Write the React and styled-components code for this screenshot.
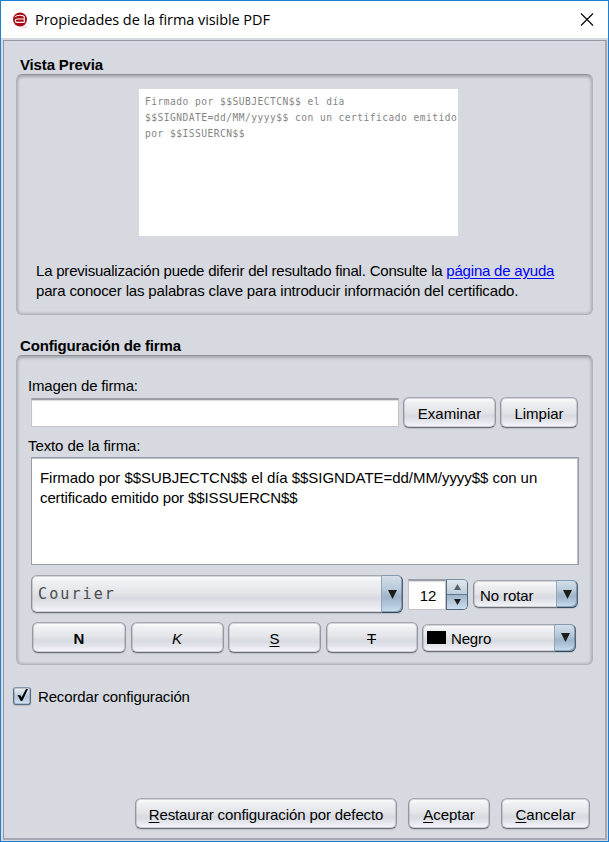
import React from "react";
import styled, { createGlobalStyle } from "styled-components";

const GlobalStyle = createGlobalStyle`
  * { box-sizing: border-box; }
  html, body { margin: 0; padding: 0; overflow: hidden; }
  body { font-family: "Liberation Sans", Arial, sans-serif; font-size: 15px; color: #000; }
`;

const Window = styled.div`
  width: 609px;
  height: 842px;
  border: 1px solid #1b80d3;
  background: #d6d9df;
  display: flex;
  flex-direction: column;
`;

const TitleBar = styled.header`
  height: 37px;
  flex: none;
  background: #fff;
  display: flex;
  align-items: center;
  padding: 0 14px 0 11px;
  svg { flex: none; display: block; }
`;

const Title = styled.h1`
  margin: 0 auto 0 7px;
  font: 400 14.5px/20px "Open Sans", "Noto Sans", sans-serif;
  letter-spacing: -0.07px;
  white-space: nowrap;
`;

const Content = styled.main`
  flex: 1;
  margin: 2px 1px 1px 2px;
  border: 1px solid #9297a1;
  border-right: 2px solid #a5a9b3;
  border-bottom: 2px solid #a5a9b3;
  display: flex;
  flex-direction: column;
  padding: 14px 12px 9px;
`;

const Heading = styled.h2`
  margin: 0 0 0 4px;
  height: 19px;
  font-size: 15px;
  line-height: 19px;
  font-weight: 700;
  letter-spacing: ${(p) => p.$ls || 0}px;
`;

const Panel = styled.section`
  width: 577px;
  height: ${(p) => p.$h}px;
  border: 1px solid #b1b3b8;
  border-top-color: #8f9299;
  border-radius: 6px;
  box-shadow: inset 0 2px 3px #a9acb2, inset 1px 0 3px #bbbdc2, inset -1px 0 3px #bbbdc2, inset 0 -1px 2px #c9cbd0;
  display: flex;
  flex-direction: column;
  padding: ${(p) => p.$pad};
`;

const Preview = styled.div`
  width: 319px;
  height: 147px;
  background: #fff;
  align-self: center;
  margin-right: 12px;
  padding: 5px 0 0 6px;
  overflow: hidden;
  font: 9.6px/16px "DejaVu Sans Mono", monospace;
  letter-spacing: 0.47px;
  color: #858585;
  white-space: pre;
`;

const Line = styled.div`
  height: ${(p) => p.$h || 20}px;
  line-height: ${(p) => p.$h || 20}px;
  margin: ${(p) => p.$m || 0};
  letter-spacing: ${(p) => p.$ls || 0}px;
  white-space: nowrap;
`;

const Help = styled.div`
  margin: 25px 0 0 19px;
`;

const Link = styled.a`
  color: #0000ff;
  text-decoration: underline;
  text-underline-offset: 2px;
`;

const Row = styled.div`
  display: flex;
  align-items: ${(p) => p.$align || "flex-start"};
  gap: ${(p) => (p.$gap === undefined ? 4 : p.$gap)}px;
  margin: ${(p) => p.$m || 0};
`;

const face = `linear-gradient(#fdfdfe 0%, #eeeff2 18%, #e3e5e9 45%, #d7dae0 62%, #e4e6ec 80%, #f5f7fc 100%)`;

const Button = styled.button`
  width: ${(p) => p.$w}px;
  height: 31px;
  flex: none;
  border: 1px solid;
  border-color: #a5a8ae #94979e #6c6f76;
  border-radius: 6px;
  background: ${face} padding-box;
  box-shadow: inset 0 0 0 1px rgba(150, 153, 160, 0.4), 0 1px 1px #bcbfc6;
  padding: 2px 0 0;
  font: 15px/18px "Liberation Sans", Arial, sans-serif;
  font-weight: ${(p) => (p.$bold ? 700 : 400)};
  font-style: ${(p) => (p.$italic ? "italic" : "normal")};
  letter-spacing: ${(p) => p.$ls || 0}px;
  color: #000;
  white-space: nowrap;
  u { text-underline-offset: 2px; text-decoration-thickness: 1px; }
`;

const Field = styled.div`
  width: ${(p) => p.$w}px;
  height: ${(p) => p.$h}px;
  flex: none;
  background: #fff;
  border: 1px solid #c3c5ca;
  border-top: 2px solid #9b9ea4;
  box-shadow: inset 0 1px 1px #dcdcdc;
  padding-left: 2px;
  text-align: center;
  line-height: 29px;
`;

const TextBox = styled.div`
  width: 548px;
  height: 108px;
  background: #fff;
  border: 1px solid #9aa0ab;
  box-shadow: inset 0 1px 0 #b9bec7, inset -1px 0 0 #b9bec7;
  padding: 10px 8px;
  margin: 0 0 10px 2px;
`;

const blue = `linear-gradient(#d3dfe9 0%, #b5c7d7 40%, #9eb4c8 58%, #b3c7da 80%, #cbdff2 100%)`;

const Combo = styled.div`
  width: ${(p) => p.$w}px;
  height: ${(p) => p.$h}px;
  flex: none;
  display: flex;
  border: 1px solid;
  border-color: #a3a7ae #8d9199 #6a6e76;
  border-radius: 6px;
  background: ${face};
  box-shadow: inset 0 0 0 1px rgba(150, 153, 160, 0.4), 0 1px 1px #bcbfc6;
`;

const ComboText = styled.div`
  flex: 1;
  display: flex;
  align-items: center;
  gap: 5px;
  padding: ${(p) => p.$pad || "2px 0 0 6px"};
  letter-spacing: ${(p) => p.$ls || 0}px;
  white-space: nowrap;
`;

const Mono = styled.span`
  font: 15px "DejaVu Sans Mono", monospace;
  letter-spacing: 2.1px;
  color: #4c4c4c;
`;

const Swatch = styled.span`
  width: 19px;
  height: 13px;
  background: #000;
  margin-top: -3px;
`;

const ComboArrow = styled.div`
  width: 22px;
  margin: -1px;
  border: 1px solid;
  border-color: #8299af #4d657c #34495f #93a5b6;
  border-radius: 0 6px 6px 0;
  background: ${blue};
  box-shadow: inset -1px -1px 0 rgba(70, 95, 120, 0.45);
  display: flex;
  align-items: center;
  justify-content: center;
`;

const Spinner = styled.div`
  width: 22px;
  height: 31px;
  flex: none;
  border: 1px solid #506980;
  border-top-color: #7890a6;
  border-radius: 0 5px 5px 0;
  overflow: hidden;
  display: flex;
  flex-direction: column;
`;

const SpinHalf = styled.div`
  flex: 1;
  display: flex;
  align-items: center;
  justify-content: center;
  background: ${(p) => (p.$down ? "linear-gradient(#9fb5c9, #b5c9db 50%, #cadef0)" : "linear-gradient(#e0e8ef, #bdcddb)")};
  border-top: ${(p) => (p.$down ? "1px solid #607990" : "0")};
`;

const CheckBox = styled.span`
  width: 18px;
  height: 18px;
  border: 1px solid #566b80;
  border-top-color: #8797a8;
  border-radius: 3px;
  background: linear-gradient(#edf1f5, #b5c6d6 55%, #d3e3f3);
  box-shadow: inset 0 0 0 1px rgba(86, 107, 128, 0.3), 0 1px 1px #b5b9c0;
  svg { display: block; margin: -1px 0 0 0; }
`;

const Footer = styled.footer`
  display: flex;
  justify-content: flex-end;
  gap: 11px;
  margin: auto 3px 0 0;
`;

const Arrow = ({ up, small, color = "#1c1c1c" }) => (
  <svg width={small ? 7 : 9} height={small ? 6 : 9} viewBox="0 0 10 10" preserveAspectRatio="none">
    <path d={up ? "M5 0 L10 10 H0 Z" : "M0 0 H10 L5 10 Z"} fill={color} />
  </svg>
);

const Logo = () => (
  <svg width="16" height="16" viewBox="0 0 16 16">
    <path d="M9 15h6" stroke="#d9c9c9" strokeWidth="1" />
    <circle cx="8" cy="7.5" r="7" fill="#a80c14" />
    <path d="M3 4.6C5.5 2.7 11 2.7 12.6 4.9M12.3 4.9V10.6M12 7H5.2c-2.6 0-2.6 3.4 0 3.4H12.3" fill="none" stroke="#fff" strokeWidth="1.1" />
  </svg>
);

export default function App() {
  return (
    <>
      <GlobalStyle />
      <Window>
        <TitleBar>
          <Logo />
          <Title>Propiedades de la firma visible PDF</Title>
          <svg width="14" height="14" viewBox="0 0 14 14">
            <path d="M1 0.5 L13 12.5 M13 0.5 L1 12.5" stroke="#000" strokeWidth="1.1" />
          </svg>
        </TitleBar>
        <Content>
          <Heading $ls={-0.15}>Vista Previa</Heading>
          <Panel $h={241} $pad="14px 0 0">
            <Preview>
              {"Firmado por $$SUBJECTCN$$ el día\n$$SIGNDATE=dd/MM/yyyy$$ con un certificado emitido\npor $$ISSUERCN$$"}
            </Preview>
            <Help>
              <Line $ls={-0.21}>
                La previsualización puede diferir del resultado final. Consulte la <Link>página de ayuda</Link>
              </Line>
              <Line $ls={-0.16}>para conocer las palabras clave para introducir información del certificado.</Line>
            </Help>
          </Panel>
          <Row $m="21px 0 0">
            <Heading $ls={-0.15}>Configuración de firma</Heading>
          </Row>
          <Panel $h={310} $pad="19px 0 0 12px">
            <Line $h={21} $ls={-0.17} $m="0 0 1px -1px">Imagen de firma:</Line>
            <Row $m="0 0 0 2px">
              <Row $m="1px 0 0"><Field $w={368} $h={29} /></Row>
              <Button $w={93}>Examinar</Button>
              <Button $w={78}>Limpiar</Button>
            </Row>
            <Line $h={20} $ls={-0.1} $m="8px 0 1px -1px">Texto de la firma:</Line>
            <TextBox>
              <Line $ls={-0.05}>Firmado por $$SUBJECTCN$$ el día $$SIGNDATE=dd/MM/yyyy$$ con un</Line>
              <Line $ls={-0.12}>certificado emitido por $$ISSUERCN$$</Line>
            </TextBox>
            <Row $m="0 0 0 2px" $gap={5} $align="center">
              <Combo $w={372} $h={38}>
                <ComboText $pad="0 0 0 6px"><Mono>Courier</Mono></ComboText>
                <ComboArrow><Arrow /></ComboArrow>
              </Combo>
              <Row $gap={0}>
                <Field $w={38} $h={31}>12</Field>
                <Spinner>
                  <SpinHalf><Arrow up small color="#5b6068" /></SpinHalf>
                  <SpinHalf $down><Arrow small /></SpinHalf>
                </Spinner>
              </Row>
              <Combo $w={105} $h={28}>
                <ComboText $ls={-0.1}>No rotar</ComboText>
                <ComboArrow><Arrow /></ComboArrow>
              </Combo>
            </Row>
            <Row $m="9px 0 0 3px" $gap={4.5} $align="center">
              <Button $w={94} $bold>N</Button>
              <Button $w={93} $italic>K</Button>
              <Button $w={93}><u>S</u></Button>
              <Button $w={92}><s>T</s></Button>
              <Combo $w={154} $h={28}>
                <ComboText $ls={-0.15} $pad="2px 0 0 4px"><Swatch />Negro</ComboText>
                <ComboArrow><Arrow /></ComboArrow>
              </Combo>
            </Row>
          </Panel>
          <Row $m="22px 0 0 -3px" $gap={7}>
            <CheckBox>
              <svg width="16" height="16" viewBox="0 0 16 16">
                <path d="M3.5 8 L6.3 8.3 L7.5 10.5 L12 2 H14 L8.3 14 H6.8 Z" fill="#000" />
              </svg>
            </CheckBox>
            <Line $ls={-0.15}>Recordar configuración</Line>
          </Row>
          <Footer>
            <Button $w={262} $ls={-0.11}><u>R</u>estaurar configuración por defecto</Button>
            <Button $w={82}><u>A</u>ceptar</Button>
            <Button $w={89}><u>C</u>ancelar</Button>
          </Footer>
        </Content>
      </Window>
    </>
  );
}
